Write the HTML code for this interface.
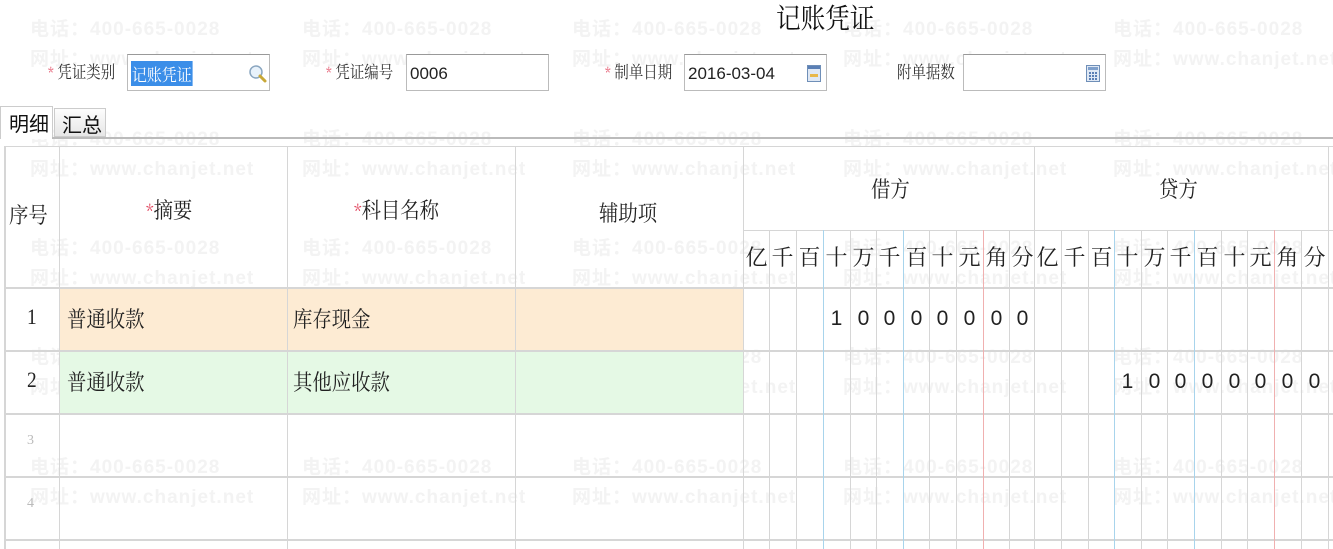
<!DOCTYPE html>
<html><head><meta charset="utf-8"><style>
*{margin:0;padding:0;box-sizing:border-box}
body{width:1333px;height:549px;overflow:hidden;background:#fff;position:relative;font-family:"Liberation Serif","Noto Serif CJK SC",serif;color:#222}
.a{position:absolute}
.wm{position:absolute;color:#f3f3f3;font:bold 19px "Liberation Sans","Noto Sans CJK SC",sans-serif;white-space:nowrap;letter-spacing:1px;line-height:30px}
.lbl{position:absolute;font:17px "Noto Serif CJK SC",serif;top:58px;color:#333;transform:scaleX(0.85);transform-origin:left}
.lbl b{color:#e0405a;font-weight:normal;font-size:14px}
.inp{position:absolute;top:54px;height:37px;width:143px;border:1px solid #bbb;border-top-color:#999;background:#fff;font:17px "Liberation Sans",sans-serif;padding:9px 3px}
.h{position:absolute;height:1px;background:#d6d6d6}
.v{position:absolute;width:1px;background:#d6d6d6}
.t{position:absolute;font-size:22px;font-family:"Noto Serif CJK SC",serif;transform:scaleX(0.88);transform-origin:left;color:#222}
.dg{position:absolute;font:21px "Liberation Sans",sans-serif;width:27px;text-align:center}
.hc{position:absolute;top:241px;width:27px;text-align:center;font:22px "Noto Serif CJK SC",serif;color:#222}
</style></head><body>
<div class="wm" style="left:30px;top:15px">电话：400-665-0028<br>网址：www.chanjet.net</div>
<div class="wm" style="left:302px;top:15px">电话：400-665-0028<br>网址：www.chanjet.net</div>
<div class="wm" style="left:572px;top:15px">电话：400-665-0028<br>网址：www.chanjet.net</div>
<div class="wm" style="left:843px;top:15px">电话：400-665-0028<br>网址：www.chanjet.net</div>
<div class="wm" style="left:1113px;top:15px">电话：400-665-0028<br>网址：www.chanjet.net</div>
<div class="wm" style="left:30px;top:125px">电话：400-665-0028<br>网址：www.chanjet.net</div>
<div class="wm" style="left:302px;top:125px">电话：400-665-0028<br>网址：www.chanjet.net</div>
<div class="wm" style="left:572px;top:125px">电话：400-665-0028<br>网址：www.chanjet.net</div>
<div class="wm" style="left:843px;top:125px">电话：400-665-0028<br>网址：www.chanjet.net</div>
<div class="wm" style="left:1113px;top:125px">电话：400-665-0028<br>网址：www.chanjet.net</div>
<div class="wm" style="left:30px;top:234px">电话：400-665-0028<br>网址：www.chanjet.net</div>
<div class="wm" style="left:302px;top:234px">电话：400-665-0028<br>网址：www.chanjet.net</div>
<div class="wm" style="left:572px;top:234px">电话：400-665-0028<br>网址：www.chanjet.net</div>
<div class="wm" style="left:843px;top:234px">电话：400-665-0028<br>网址：www.chanjet.net</div>
<div class="wm" style="left:1113px;top:234px">电话：400-665-0028<br>网址：www.chanjet.net</div>
<div class="wm" style="left:30px;top:343px">电话：400-665-0028<br>网址：www.chanjet.net</div>
<div class="wm" style="left:302px;top:343px">电话：400-665-0028<br>网址：www.chanjet.net</div>
<div class="wm" style="left:572px;top:343px">电话：400-665-0028<br>网址：www.chanjet.net</div>
<div class="wm" style="left:843px;top:343px">电话：400-665-0028<br>网址：www.chanjet.net</div>
<div class="wm" style="left:1113px;top:343px">电话：400-665-0028<br>网址：www.chanjet.net</div>
<div class="wm" style="left:30px;top:453px">电话：400-665-0028<br>网址：www.chanjet.net</div>
<div class="wm" style="left:302px;top:453px">电话：400-665-0028<br>网址：www.chanjet.net</div>
<div class="wm" style="left:572px;top:453px">电话：400-665-0028<br>网址：www.chanjet.net</div>
<div class="wm" style="left:843px;top:453px">电话：400-665-0028<br>网址：www.chanjet.net</div>
<div class="wm" style="left:1113px;top:453px">电话：400-665-0028<br>网址：www.chanjet.net</div>

<div class="a" style="left:776px;top:-3px;font:28px 'Noto Serif CJK SC',serif;transform:scaleX(0.88);transform-origin:left;color:#111">记账凭证</div>

<div class="lbl" style="left:48px"><b>*</b> 凭证类别</div>
<div class="inp" style="left:127px"><span style="background:#3b8ee8;color:#fff;font:17px 'Noto Serif CJK SC',serif;padding:0 1px;position:relative;top:-3px;display:inline-block;transform:scaleX(0.88);transform-origin:left">记账凭证</span>
<svg class="a" style="left:120px;top:9px" width="20" height="20" viewBox="0 0 20 20"><circle cx="8" cy="8" r="6" fill="#e8f2fb" stroke="#8aa6c0" stroke-width="1.5"/><path d="M12 12l5 5" stroke="#c8a838" stroke-width="3" stroke-linecap="round"/></svg></div>
<div class="lbl" style="left:326px"><b>*</b> 凭证编号</div>
<div class="inp" style="left:406px">0006</div>
<div class="lbl" style="left:605px"><b>*</b> 制单日期</div>
<div class="inp" style="left:684px">2016-03-04
<svg class="a" style="left:122px;top:10px" width="14" height="17" viewBox="0 0 14 17"><rect x=".5" y=".5" width="13" height="16" fill="#dfe8f4" stroke="#6f8fb8"/><rect x="1" y="1" width="12" height="3" fill="#5a7fb5"/><rect x="3" y="9" width="8" height="3" fill="#e8b84a"/></svg></div>
<div class="lbl" style="left:897px">附单据数</div>
<div class="inp" style="left:963px">
<svg class="a" style="left:122px;top:10px" width="14" height="17" viewBox="0 0 14 17"><rect x=".5" y=".5" width="13" height="16" fill="#dfe8f4" stroke="#6f8fb8"/><rect x="2" y="2" width="10" height="3" fill="#7fa0cc"/><path d="M3 8h2M6 8h2M9 8h2M3 11h2M6 11h2M9 11h2M3 14h2M6 14h2M9 14h2" stroke="#5a7fb5" stroke-width="2"/></svg></div>

<div class="a" style="left:0;top:106px;width:53px;height:33px;border:1px solid #ccc;border-bottom:none;background:#fff;font:20px 'Noto Sans CJK SC',sans-serif;padding:1px 0 0 8px;color:#111">明细</div>
<div class="a" style="left:54px;top:108px;width:52px;height:29px;border:1px solid #ccc;background:linear-gradient(#fdfdfd,#e6e6e6);font:20px 'Noto Sans CJK SC',sans-serif;padding:0 0 0 7px;color:#111">汇总</div>
<div class="a" style="left:52px;top:137px;width:1281px;height:2px;background:#bbb"></div>

<div class="a" style="left:60px;top:288px;width:683px;height:62px;background:#fdebd3"></div>
<div class="a" style="left:60px;top:351px;width:683px;height:62px;background:#e5f9e5"></div>

<div class="h" style="left:4px;top:146px;width:1329px"></div>
<div class="h" style="left:743px;top:230px;width:590px"></div>
<div class="h" style="left:4px;top:287px;width:1329px;height:2px"></div>
<div class="h" style="left:4px;top:350px;width:1329px;height:2px"></div>
<div class="h" style="left:4px;top:413px;width:1329px;height:2px"></div>
<div class="h" style="left:4px;top:476px;width:1329px;height:2px"></div>
<div class="h" style="left:4px;top:539px;width:1329px;height:2px"></div>
<div class="v" style="left:4px;top:146px;height:403px;width:2px"></div>
<div class="v" style="left:59px;top:146px;height:403px"></div>
<div class="v" style="left:287px;top:146px;height:403px"></div>
<div class="v" style="left:515px;top:146px;height:403px"></div>
<div class="v" style="left:743px;top:146px;height:403px"></div>
<div class="v" style="left:1034px;top:146px;height:403px"></div>
<div class="v" style="left:1328px;top:146px;height:403px"></div>
<div class="v" style="left:769px;top:230px;height:319px"></div>
<div class="v" style="left:796px;top:230px;height:319px"></div>
<div class="v" style="left:823px;top:230px;height:319px;background:#a8d4ec"></div>
<div class="v" style="left:850px;top:230px;height:319px"></div>
<div class="v" style="left:876px;top:230px;height:319px"></div>
<div class="v" style="left:903px;top:230px;height:319px;background:#a8d4ec"></div>
<div class="v" style="left:929px;top:230px;height:319px"></div>
<div class="v" style="left:956px;top:230px;height:319px"></div>
<div class="v" style="left:983px;top:230px;height:319px;background:#f0b0b0"></div>
<div class="v" style="left:1009px;top:230px;height:319px"></div>
<div class="v" style="left:1061px;top:230px;height:319px"></div>
<div class="v" style="left:1088px;top:230px;height:319px"></div>
<div class="v" style="left:1114px;top:230px;height:319px;background:#a8d4ec"></div>
<div class="v" style="left:1141px;top:230px;height:319px"></div>
<div class="v" style="left:1167px;top:230px;height:319px"></div>
<div class="v" style="left:1194px;top:230px;height:319px;background:#a8d4ec"></div>
<div class="v" style="left:1221px;top:230px;height:319px"></div>
<div class="v" style="left:1247px;top:230px;height:319px"></div>
<div class="v" style="left:1274px;top:230px;height:319px;background:#f0b0b0"></div>
<div class="v" style="left:1301px;top:230px;height:319px"></div>

<div class="t" style="left:9px;top:199px">序号</div>
<div class="t" style="left:146px;top:194px"><span style="color:#e0405a;font-size:18px">*</span>摘要</div>
<div class="t" style="left:354px;top:194px"><span style="color:#e0405a;font-size:18px">*</span>科目名称</div>
<div class="t" style="left:599px;top:197px">辅助项</div>
<div class="t" style="left:871px;top:173px">借方</div>
<div class="t" style="left:1159px;top:173px">贷方</div>

<div class="hc" style="left:743px">亿</div><div class="hc" style="left:769px">千</div><div class="hc" style="left:796px">百</div><div class="hc" style="left:823px">十</div><div class="hc" style="left:850px">万</div><div class="hc" style="left:876px">千</div><div class="hc" style="left:903px">百</div><div class="hc" style="left:929px">十</div><div class="hc" style="left:956px">元</div><div class="hc" style="left:983px">角</div><div class="hc" style="left:1009px">分</div>
<div class="hc" style="left:1034px">亿</div><div class="hc" style="left:1061px">千</div><div class="hc" style="left:1088px">百</div><div class="hc" style="left:1114px">十</div><div class="hc" style="left:1141px">万</div><div class="hc" style="left:1167px">千</div><div class="hc" style="left:1194px">百</div><div class="hc" style="left:1221px">十</div><div class="hc" style="left:1247px">元</div><div class="hc" style="left:1274px">角</div><div class="hc" style="left:1301px">分</div>

<div class="t" style="left:27px;top:304px;font-family:'Liberation Serif',serif">1</div>
<div class="t" style="left:67px;top:303px">普通收款</div>
<div class="t" style="left:293px;top:303px">库存现金</div>
<div class="t" style="left:27px;top:367px;font-family:'Liberation Serif',serif">2</div>
<div class="t" style="left:67px;top:366px">普通收款</div>
<div class="t" style="left:293px;top:366px">其他应收款</div>
<div class="a" style="left:27px;top:433px;font:14px 'Liberation Serif',serif;color:#bbb">3</div>
<div class="a" style="left:27px;top:496px;font:14px 'Liberation Serif',serif;color:#bbb">4</div>

<div class="dg" style="left:823px;top:307px">1</div>
<div class="dg" style="left:850px;top:307px">0</div>
<div class="dg" style="left:876px;top:307px">0</div>
<div class="dg" style="left:903px;top:307px">0</div>
<div class="dg" style="left:929px;top:307px">0</div>
<div class="dg" style="left:956px;top:307px">0</div>
<div class="dg" style="left:983px;top:307px">0</div>
<div class="dg" style="left:1009px;top:307px">0</div>

<div class="dg" style="left:1114px;top:370px">1</div>
<div class="dg" style="left:1141px;top:370px">0</div>
<div class="dg" style="left:1167px;top:370px">0</div>
<div class="dg" style="left:1194px;top:370px">0</div>
<div class="dg" style="left:1221px;top:370px">0</div>
<div class="dg" style="left:1247px;top:370px">0</div>
<div class="dg" style="left:1274px;top:370px">0</div>
<div class="dg" style="left:1301px;top:370px">0</div>
</body></html>
